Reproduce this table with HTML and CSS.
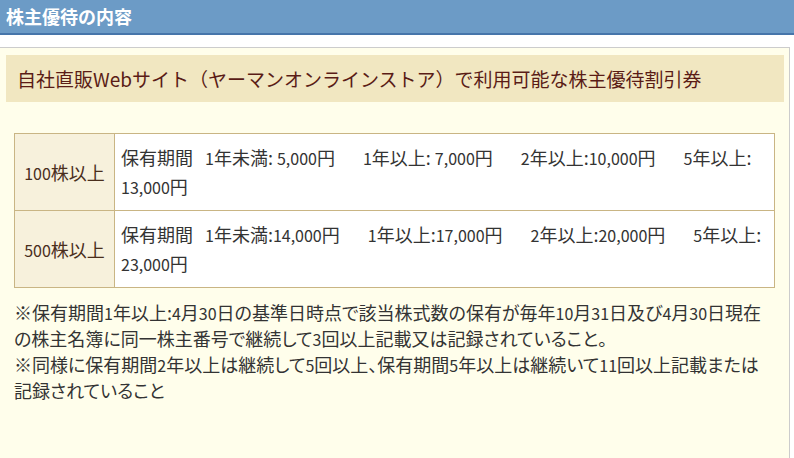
FILE: index.html
```html
<!DOCTYPE html>
<html lang="ja">
<head>
<meta charset="utf-8">
<title>株主優待の内容</title>
<link rel="stylesheet" href="styles.css">
</head>
<body>
<h2 class="section-head">株主優待の内容</h2>
<div class="panel">
  <h3 class="panel-title">自社直販Webサイト（ヤーマンオンラインストア）で利用可能な株主優待割引券</h3>
  <table class="benefit">
    <tr>
      <th><span class="num">100</span>株以上</th>
      <td><span class="term">保有期間</span><span class="tier"><span class="num">1</span>年未満: <span class="num">5,000</span>円</span><span class="tier"><span class="num">1</span>年以上: <span class="num">7,000</span>円</span><span class="tier"><span class="num">2</span>年以上:<span class="num">10,000</span>円</span><span class="tier"><span class="num">5</span>年以上: <span class="num">13,000</span>円</span></td>
    </tr>
    <tr>
      <th><span class="num">500</span>株以上</th>
      <td><span class="term">保有期間</span><span class="tier"><span class="num">1</span>年未満:<span class="num">14,000</span>円</span><span class="tier"><span class="num">1</span>年以上:<span class="num">17,000</span>円</span><span class="tier"><span class="num">2</span>年以上:<span class="num">20,000</span>円</span><span class="tier"><span class="num">5</span>年以上:<wbr><span class="num">23,000</span>円</span></td>
    </tr>
  </table>
  <p class="note">※保有期間<span class="num">1</span>年以上:<span class="num">4</span>月<span class="num">30</span>日の基準日時点で該当株式数の保有が毎年<span class="num">10</span>月<span class="num">31</span>日及び<span class="num">4</span>月<span class="num">30</span>日現在の株主名簿に同一株主番号で継続して<span class="num">3</span>回以上記載又は記録されていること。<br>※同様に保有期間<span class="num">2</span>年以上は継続して<span class="num">5</span>回以上、保有期間<span class="num">5</span>年以上は継続いて<span class="num">11</span>回以上記載または記録されていること</p>
</div>
</body>
</html>
```
FILE: styles.css
```css
html, body {
  margin: 0;
  padding: 0;
  background: #ffffff;
}
body {
  font-family: "Noto Sans CJK JP", "Noto Sans", sans-serif;
  font-feature-settings: "palt";
  color: #333333;
}
.num {
  font-size: 16px;
}
.section-head {
  margin: 0 0 12px 0;
  height: 33px;
  line-height: 33px;
  padding-left: 6px;
  background: #6c9bc6;
  border-bottom: 2px solid #4675aa;
  color: #ffffff;
  font-size: 18px;
  font-weight: bold;
  font-feature-settings: normal;
}
.panel {
  margin-right: 4px;
  border: 1px solid #cccccc;
  border-left: none;
  background: #fffeeb;
  padding: 7px 5px 59px 6px;
}
.panel-title {
  margin: 0 0 31px 0;
  height: 47px;
  line-height: 47px;
  padding-left: 11px;
  background: #f1e7c1;
  color: #5a1c16;
  font-size: 19px;
  font-weight: normal;
  font-feature-settings: normal;
}
.benefit {
  margin: 0 9px 0 8px;
  width: calc(100% - 17px);
  border-collapse: collapse;
  font-size: 18px;
  line-height: 28px;
}
.benefit th,
.benefit td {
  border: 1px solid #c9b584;
  padding: 9px 6px;
  vertical-align: middle;
}
.benefit th {
  width: 99px;
  background: #f7f1dc;
  color: #4a2e1c;
  font-weight: normal;
  text-align: center;
  padding: 9px 0;
}
.benefit td {
  background: #ffffff;
  color: #333333;
  text-align: left;
}
.term {
  margin-right: 12px;
}
.tier + .tier {
  margin-left: 28px;
}
.note {
  margin: 12px 18px 0 8px;
  font-size: 18px;
  line-height: 25px;
  color: #333333;
}
```
